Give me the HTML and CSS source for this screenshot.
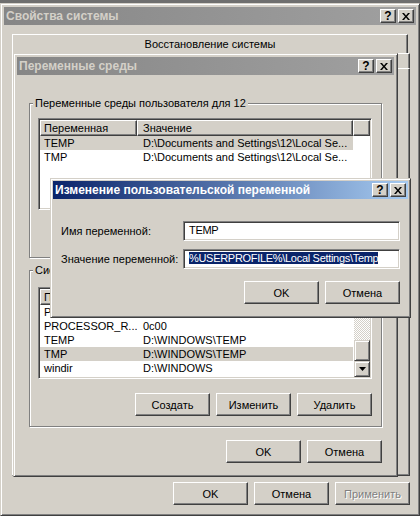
FILE: index.html
```html
<!DOCTYPE html>
<html lang="ru">
<head>
<meta charset="utf-8">
<title>Свойства системы</title>
<link rel="stylesheet" href="styles.css">
</head>
<body>
<div class="screen">

  <section class="win win-sys">
    <header class="caption inactive">
      <span class="caption-text">Свойства системы</span>
      <span class="cap-btns">
        <span class="cap-btn">?</span>
        <span class="cap-btn"><svg width="8" height="7" viewBox="0 0 8 7"><path d="M0 0h2l2 2.4 2-2.4h2l-3 3.5 3 3.5h-2l-2-2.4-2 2.4h-2l3-3.5z"/></svg></span>
      </span>
    </header>
    <div class="tabs">
      <div class="tab-row tab-row1">Восстановление системы</div>
      <div class="tab-row tab-row2"></div>
      <div class="tab-panel"></div>
    </div>
    <div class="btn-row sys-btns">
      <div class="btn">OK</div>
      <div class="btn">Отмена</div>
      <div class="btn disabled">Применить</div>
    </div>
  </section>

  <section class="win win-env">
    <header class="caption inactive">
      <span class="caption-text">Переменные среды</span>
      <span class="cap-btns">
        <span class="cap-btn">?</span>
        <span class="cap-btn"><svg width="8" height="7" viewBox="0 0 8 7"><path d="M0 0h2l2 2.4 2-2.4h2l-3 3.5 3 3.5h-2l-2-2.4-2 2.4h-2l3-3.5z"/></svg></span>
      </span>
    </header>
    <div class="env-body">
      <div class="group group-user">
        <div class="group-title">Переменные среды пользователя для 12</div>
        <div class="listview">
          <div class="lv-main">
            <div class="lv-head">
              <div class="lv-col c1">Переменная</div>
              <div class="lv-col c2">Значение</div>
              <div class="lv-col c3"></div>
            </div>
            <div class="lv-row sel"><span class="c1">TEMP</span><span class="c2">D:\Documents and Settings\12\Local Se...</span></div>
            <div class="lv-row"><span class="c1">TMP</span><span class="c2">D:\Documents and Settings\12\Local Se...</span></div>
          </div>
        </div>
      </div>

      <div class="group group-sys">
        <div class="group-title">Системные переменные</div>
        <div class="listview">
          <div class="lv-main">
            <div class="lv-head">
              <div class="lv-col c1">Переменная</div>
              <div class="lv-col c2">Значение</div>
              <div class="lv-col c3"></div>
            </div>
            <div class="lv-row"><span class="c1">PATHEXT</span><span class="c2">.COM;.EXE;.BAT;.CMD;.VBS;.VBE;...</span></div>
            <div class="lv-row"><span class="c1">PROCESSOR_R...</span><span class="c2">0c00</span></div>
            <div class="lv-row"><span class="c1">TEMP</span><span class="c2">D:\WINDOWS\TEMP</span></div>
            <div class="lv-row sel"><span class="c1">TMP</span><span class="c2">D:\WINDOWS\TEMP</span></div>
            <div class="lv-row"><span class="c1">windir</span><span class="c2">D:\WINDOWS</span></div>
          </div>
          <div class="scrollbar">
            <div class="sb-btn"><svg width="7" height="4" viewBox="0 0 7 4"><path d="M3.5 0L7 4H0z"/></svg></div>
            <div class="sb-track"><div class="sb-thumb"></div></div>
            <div class="sb-btn"><svg width="7" height="4" viewBox="0 0 7 4"><path d="M0 0h7L3.5 4z"/></svg></div>
          </div>
        </div>
        <div class="btn-row group-btns">
          <div class="btn">Создать</div>
          <div class="btn">Изменить</div>
          <div class="btn">Удалить</div>
        </div>
      </div>

      <div class="btn-row env-btns">
        <div class="btn">OK</div>
        <div class="btn">Отмена</div>
      </div>
    </div>
  </section>

  <section class="win win-edit">
    <header class="caption active">
      <span class="caption-text">Изменение пользовательской переменной</span>
      <span class="cap-btns">
        <span class="cap-btn">?</span>
        <span class="cap-btn"><svg width="8" height="7" viewBox="0 0 8 7"><path d="M0 0h2l2 2.4 2-2.4h2l-3 3.5 3 3.5h-2l-2-2.4-2 2.4h-2l3-3.5z"/></svg></span>
      </span>
    </header>
    <div class="edit-body">
      <div class="field">
        <span class="field-label">Имя переменной:</span>
        <div class="edit">TEMP</div>
      </div>
      <div class="field">
        <span class="field-label">Значение переменной:</span>
        <div class="edit"><span class="sel-text">%USERPROFILE%\Local Settings\Temp</span></div>
      </div>
      <div class="btn-row edit-btns">
        <div class="btn">OK</div>
        <div class="btn">Отмена</div>
      </div>
    </div>
  </section>

</div>
</body>
</html>
```

FILE: styles.css
```css
* { box-sizing: border-box; }
html, body { margin: 0; padding: 0; }
body {
  background: #6f6f6f;
  font: 11px/14px "Liberation Sans", Arial, sans-serif;
  color: #000;
}
.screen {
  position: relative;
  width: 420px;
  height: 516px;
  overflow: hidden;
  background: #6f6f6f;
}

/* windows */
.win {
  position: absolute;
  display: flex;
  flex-direction: column;
  background: #d4d0c8;
  border: 1px solid;
  border-color: #d4d0c8 #404040 #404040 #d4d0c8;
  box-shadow: inset 1px 1px #fff, inset -1px -1px #808080;
  padding: 3px;
}
.win-sys { left: 0; top: 3px; width: 420px; height: 513px; }
.win-env { left: 13px; top: 53px; width: 385px; height: 424px; }
.win-edit { left: 50px; top: 178px; width: 361px; height: 140px; padding: 2px; }

/* captions */
.caption {
  flex: none;
  display: flex;
  align-items: center;
  height: 18px;
  padding: 0 2px 0 2px;
  font-weight: bold;
  font-size: 12px;
}
.caption.inactive { background: linear-gradient(90deg, #868686, #a0a0a0); color: #d4d0c8; }
.caption.active { background: linear-gradient(90deg, #0a246a, #a6caf0); color: #fff; }
.caption-text { flex: 1; white-space: nowrap; overflow: hidden; }
.cap-btns { display: flex; gap: 2px; }
.cap-btn {
  width: 16px;
  height: 14px;
  display: flex;
  align-items: center;
  justify-content: center;
  background: #d4d0c8;
  border: 1px solid;
  border-color: #fff #404040 #404040 #fff;
  box-shadow: inset -1px -1px #808080;
  color: #000;
  font-size: 12px;
  font-weight: bold;
  line-height: 12px;
}
.cap-btn svg { display: block; fill: #000; }

/* tabs */
.tabs { display: flex; flex-direction: column; margin: 9px 6px 0 8px; }
.tab-row {
  border-top: 1px solid #fff;
  border-left: 1px solid #fff;
  border-right: 1px solid #404040;
  box-shadow: inset -1px 0 #808080;
}
.tab-row1 { height: 19px; margin-right: 2px; text-align: center; line-height: 18px; }
.tab-row2 { height: 15px; }
.tab-panel {
  height: 408px;
  border: 1px solid;
  border-color: #fff #404040 #404040 #fff;
  box-shadow: inset -1px -1px #808080;
}

/* buttons */
.btn-row { display: flex; justify-content: flex-end; gap: 6px; }
.btn {
  width: 75px;
  height: 23px;
  display: flex;
  align-items: center;
  justify-content: center;
  background: #d4d0c8;
  border: 1px solid;
  border-color: #fff #404040 #404040 #fff;
  box-shadow: inset -1px -1px #808080;
}
.btn.disabled { color: #808080; text-shadow: 1px 1px #fff; }
.sys-btns { margin: 6px 6px 0 0; }

/* environment window */
.env-body { padding: 0 12px; }
.group {
  border: 1px solid #808080;
  box-shadow: inset 1px 1px #fff, 1px 1px #fff;
}
.group-user { margin-top: 28px; height: 155px; }
.group-sys { margin-top: 12px; height: 157px; }
.group-title {
  width: max-content;
  margin: -8px 0 0 3px;
  padding: 0 2px;
  background: #d4d0c8;
  line-height: 14px;
}
.group-user .listview { margin-top: 8px; }
.group-sys .listview { margin-top: 10px; }
.listview {
  display: flex;
  margin-left: 8px;
  width: 334px;
  height: 92px;
  background: #fff;
  border: 1px solid;
  border-color: #808080 #fff #fff #808080;
  box-shadow: inset 1px 1px #404040, inset -1px -1px #d4d0c8;
  padding: 1px;
}
.lv-main { flex: 1; min-width: 0; overflow: hidden; }
.lv-head { display: flex; height: 16px; }
.lv-col {
  background: #d4d0c8;
  border: 1px solid;
  border-color: #fff #404040 #404040 #fff;
  box-shadow: inset -1px -1px #808080;
  line-height: 14px;
  white-space: nowrap;
  overflow: hidden;
}
.lv-col.c1 { width: 97px; padding-left: 3px; }
.lv-col.c2 { width: 216px; padding-left: 5px; }
.lv-col.c3 { flex: 1; }
.lv-row { display: flex; width: 313px; height: 14px; line-height: 14px; white-space: nowrap; }
.lv-row.sel { background: #d4d0c8; }
.lv-row .c1 { width: 97px; padding-left: 4px; overflow: hidden; }
.lv-row .c2 { width: 216px; padding-left: 6px; overflow: hidden; }

.scrollbar { width: 16px; display: flex; flex-direction: column; }
.sb-btn, .sb-thumb {
  background: #d4d0c8;
  border: 1px solid;
  border-color: #d4d0c8 #404040 #404040 #d4d0c8;
  box-shadow: inset 1px 1px #fff, inset -1px -1px #808080;
}
.sb-btn { height: 16px; display: flex; align-items: center; justify-content: center; }
.sb-btn svg { display: block; fill: #000; }
.sb-track {
  flex: 1;
  display: flex;
  flex-direction: column;
  justify-content: flex-end;
  background-image: repeating-conic-gradient(#d4d0c8 0 25%, #fff 0 50%);
  background-size: 2px 2px;
}
.sb-thumb { height: 21px; }

.group-btns { margin: 14px 9px 0 0; }
.env-btns { margin-top: 13px; }

/* edit window */
.edit-body { padding: 0 8px; }
.field { display: flex; align-items: center; height: 20px; }
.field:first-child { margin-top: 22px; }
.field + .field { margin-top: 8px; }
.field-label { white-space: nowrap; }
.edit {
  margin-left: auto;
  width: 217px;
  height: 20px;
  background: #fff;
  border: 1px solid;
  border-color: #808080 #fff #fff #808080;
  box-shadow: inset 1px 1px #404040, inset -1px -1px #d4d0c8;
  padding: 0 0 0 5px;
  line-height: 17px;
  white-space: nowrap;
  overflow: hidden;
  letter-spacing: -0.3px;
}
.sel-text { background: #0a246a; color: #fff; }
.edit-btns { margin-top: 12px; }
```
